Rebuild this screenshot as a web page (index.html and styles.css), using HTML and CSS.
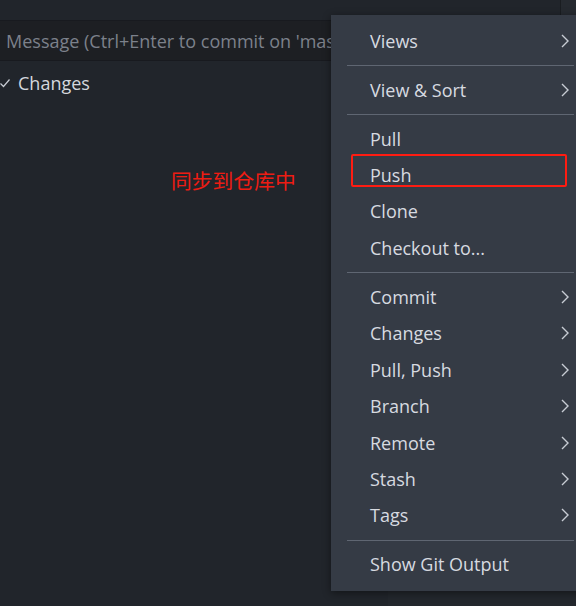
FILE: index.html
```html
<!DOCTYPE html>
<html>
<head>
<meta charset="utf-8">
<link rel="stylesheet" href="styles.css">
</head>
<body>
<div class="screen">
  <div class="sidebar">
    <div class="topgap"></div>
    <div class="input"><span class="placeholder">Message (Ctrl+Enter to commit on 'master')</span></div>
    <div class="group">
      <svg class="check" width="10" height="10" viewBox="0 0 10 10"><path d="M0.5 5.5 L3.5 8.5 L9.5 1.5" fill="none" stroke="#c8ccd4" stroke-width="1.2"/></svg>
      <span class="group-label">Changes</span>
    </div>
  </div>
  <div class="editor">
    <div class="editor-top"><div class="editor-top-left"></div></div>
    <div class="editor-body"></div>
  </div>

  <div class="note">同步到仓库中</div>

  <div class="menu">
    <div class="item"><span>Views</span><svg class="chev" viewBox="0 0 8 14"><path d="M1 1 L7 7 L1 13" fill="none" stroke="#c8ccd4" stroke-width="1.4"/></svg></div>
    <div class="sep"></div>
    <div class="item"><span>View &amp; Sort</span><svg class="chev" viewBox="0 0 8 14"><path d="M1 1 L7 7 L1 13" fill="none" stroke="#c8ccd4" stroke-width="1.4"/></svg></div>
    <div class="sep"></div>
    <div class="item"><span>Pull</span></div>
    <div class="item"><span>Push</span></div>
    <div class="item"><span>Clone</span></div>
    <div class="item"><span>Checkout to...</span></div>
    <div class="sep"></div>
    <div class="item"><span>Commit</span><svg class="chev" viewBox="0 0 8 14"><path d="M1 1 L7 7 L1 13" fill="none" stroke="#c8ccd4" stroke-width="1.4"/></svg></div>
    <div class="item"><span>Changes</span><svg class="chev" viewBox="0 0 8 14"><path d="M1 1 L7 7 L1 13" fill="none" stroke="#c8ccd4" stroke-width="1.4"/></svg></div>
    <div class="item"><span>Pull, Push</span><svg class="chev" viewBox="0 0 8 14"><path d="M1 1 L7 7 L1 13" fill="none" stroke="#c8ccd4" stroke-width="1.4"/></svg></div>
    <div class="item"><span>Branch</span><svg class="chev" viewBox="0 0 8 14"><path d="M1 1 L7 7 L1 13" fill="none" stroke="#c8ccd4" stroke-width="1.4"/></svg></div>
    <div class="item"><span>Remote</span><svg class="chev" viewBox="0 0 8 14"><path d="M1 1 L7 7 L1 13" fill="none" stroke="#c8ccd4" stroke-width="1.4"/></svg></div>
    <div class="item"><span>Stash</span><svg class="chev" viewBox="0 0 8 14"><path d="M1 1 L7 7 L1 13" fill="none" stroke="#c8ccd4" stroke-width="1.4"/></svg></div>
    <div class="item"><span>Tags</span><svg class="chev" viewBox="0 0 8 14"><path d="M1 1 L7 7 L1 13" fill="none" stroke="#c8ccd4" stroke-width="1.4"/></svg></div>
    <div class="sep"></div>
    <div class="item"><span>Show Git Output</span></div>
  </div>

  <div class="highlight"></div>
</div>
</body>
</html>
```
FILE: styles.css
```css
* { box-sizing: border-box; }
html, body { margin: 0; padding: 0; }
body {
  width: 576px;
  height: 606px;
  overflow: hidden;
  background: #21252b;
  font-family: "Open Sans", "Noto Sans", sans-serif;
}
.screen {
  position: relative;
  display: flex;
  width: 576px;
  height: 606px;
}
.sidebar {
  width: 388px;
  flex: none;
  background: #21252b;
  display: flex;
  flex-direction: column;
  overflow: hidden;
}
.topgap { height: 20px; flex: none; }
.input {
  height: 41px;
  flex: none;
  background: #1d1f23;
  border-top: 1px solid #181a1f;
  border-bottom: 1px solid #181a1f;
  padding-left: 6px;
  display: flex;
  align-items: center;
  white-space: nowrap;
  overflow: hidden;
}
.placeholder {
  color: #7c818b;
  font-size: 18px;
}
.group {
  height: 44px;
  display: flex;
  align-items: center;
  padding-left: 0;
}
.check { margin-right: 8px; flex: none; }
.group-label {
  color: #d4d7dd;
  font-size: 18px;
}
.editor {
  flex: 1;
  display: flex;
  flex-direction: column;
}
.editor-top {
  height: 15px;
  flex: none;
  display: flex;
  background: #262a30;
}
.editor-top-left {
  width: 173px;
  background: #21252b;
  border-right: 1px solid #1a1d21;
}
.editor-body {
  flex: 1;
  background: #23272d;
}
.note {
  position: absolute;
  left: 171px;
  top: 167px;
  font-family: "Noto Sans CJK SC", sans-serif;
  font-size: 20.8px;
  line-height: 26px;
  color: #ee1c13;
}
.menu {
  position: absolute;
  left: 331px;
  top: 15px;
  width: 259px;
  height: 576px;
  background: #353b45;
  padding: 7.5px 0 8px 0;
  box-shadow: 0 2px 8px rgba(0, 0, 0, 0.45);
  color: #d7dae0;
  font-size: 18px;
}
.item {
  height: 36.45px;
  display: flex;
  align-items: center;
  justify-content: space-between;
  padding-left: 39px;
  padding-right: 21px;
}
.chev { width: 8px; height: 14px; }
.sep {
  height: 1px;
  background: #5f6672;
  margin: 6px 16px 5.5px 16px;
}
.highlight {
  position: absolute;
  left: 351px;
  top: 154px;
  width: 216px;
  height: 33px;
  border: 2.5px solid #ff1c12;
  border-radius: 2px;
}
```
